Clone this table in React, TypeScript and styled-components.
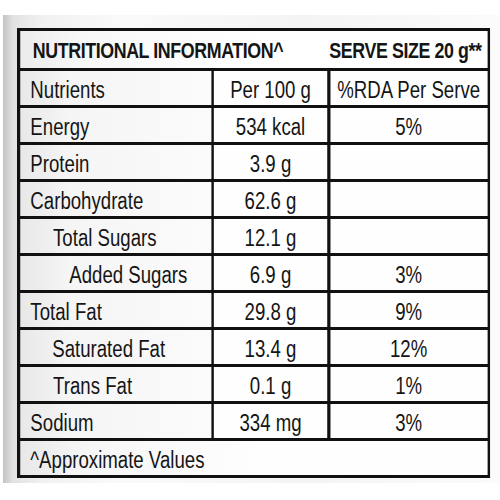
import styled, {createGlobalStyle} from "styled-components";

const GlobalStyle = createGlobalStyle`
  html, body {
    margin: 0;
    padding: 0;
    background: #ffffff;
  }
`

const Page = styled.div`
  width: 500px;
  height: 500px;
  padding: 15px 0 17px 3px;
  box-sizing: border-box;
`
const Sheet = styled.div`
  height: 100%;
  padding: 13px 0 0 14px;
  box-sizing: border-box;
  overflow: hidden;
  background: linear-gradient(90deg, #c4c4c4 0px, #e2e2e2 10px, #f1f1f1 40px, #fafafa 120px, #f4f4f4 300px, #fbfbfb 497px);
`
// the print on the pack is a condensed face, so the grid is drawn wide and squeezed
const Board = styled.div`
  width: 584px;
  box-sizing: border-box;
  display: grid;
  grid-template-columns: 236px 140px 1fr;
  grid-template-rows: 37px repeat(11, 34px);
  gap: 3px 3.5px;
  padding: 3px 3.5px;
  background: #111;
  transform: scaleX(0.81);
  transform-origin: left top;
  font-family: "Liberation Sans", Arial, sans-serif;
  font-size: 23px;
  line-height: 26px;
  color: #151515;
  white-space: nowrap;
`
const Cell = styled.div<{ $col: number }>`
  display: flex;
  align-items: center;
  padding-top: 3px;
  box-sizing: border-box;
  justify-content: ${props => props.$col === 0 ? 'flex-start' : 'center'};
  background: ${props => props.$col === 0
          ? 'linear-gradient(90deg, #e8e8e8 0px, #f5f5f5 60px, #fbfbfb 236px)'
          : '#fefefe'};
`
const NameCell = styled(Cell)<{ $indent: number }>`
  padding-left: ${props => 13 + props.$indent}px;
`
const HeaderCell = styled.div`
  grid-column: 1 / -1;
  display: flex;
  align-items: center;
  justify-content: space-between;
  padding: 3px 7px 0 16px;
  font-size: 22px;
  font-weight: bold;
  letter-spacing: -0.5px;
  background: linear-gradient(90deg, #ececec 0px, #f8f8f8 80px, #ffffff 300px);
`
const NoteCell = styled.div`
  grid-column: 1 / -1;
  display: flex;
  align-items: center;
  padding: 3px 0 0 13px;
  background: linear-gradient(90deg, #e8e8e8 0px, #f6f6f6 80px, #fefefe 300px);
`

type Nutrient = {
    name: string
    indent: number
    per100: string
    rda: string
}

const nutrients: Nutrient[] = [
    {name: 'Nutrients', indent: 0, per100: 'Per 100 g', rda: '%RDA Per Serve'},
    {name: 'Energy', indent: 0, per100: '534 kcal', rda: '5%'},
    {name: 'Protein', indent: 0, per100: '3.9 g', rda: ''},
    {name: 'Carbohydrate', indent: 0, per100: '62.6 g', rda: ''},
    {name: 'Total Sugars', indent: 28, per100: '12.1 g', rda: ''},
    {name: 'Added Sugars', indent: 48, per100: '6.9 g', rda: '3%'},
    {name: 'Total Fat', indent: 0, per100: '29.8 g', rda: '9%'},
    {name: 'Saturated Fat', indent: 27, per100: '13.4 g', rda: '12%'},
    {name: 'Trans Fat', indent: 28, per100: '0.1 g', rda: '1%'},
    {name: 'Sodium', indent: 0, per100: '334 mg', rda: '3%'},
]

const App = () => {
    return (
        <Page>
            <GlobalStyle/>
            <Sheet>
                <Board>
                    <HeaderCell>
                        <span>NUTRITIONAL INFORMATION^</span>
                        <span>SERVE SIZE 20 g**</span>
                    </HeaderCell>
                    {
                        nutrients.map(item => [
                            <NameCell key={item.name + '-n'} $col={0} $indent={item.indent}>{item.name}</NameCell>,
                            <Cell key={item.name + '-p'} $col={1}>{item.per100}</Cell>,
                            <Cell key={item.name + '-r'} $col={2}>{item.rda}</Cell>
                        ])
                    }
                    <NoteCell>^Approximate Values</NoteCell>
                </Board>
            </Sheet>
        </Page>
    )
}

export default App
